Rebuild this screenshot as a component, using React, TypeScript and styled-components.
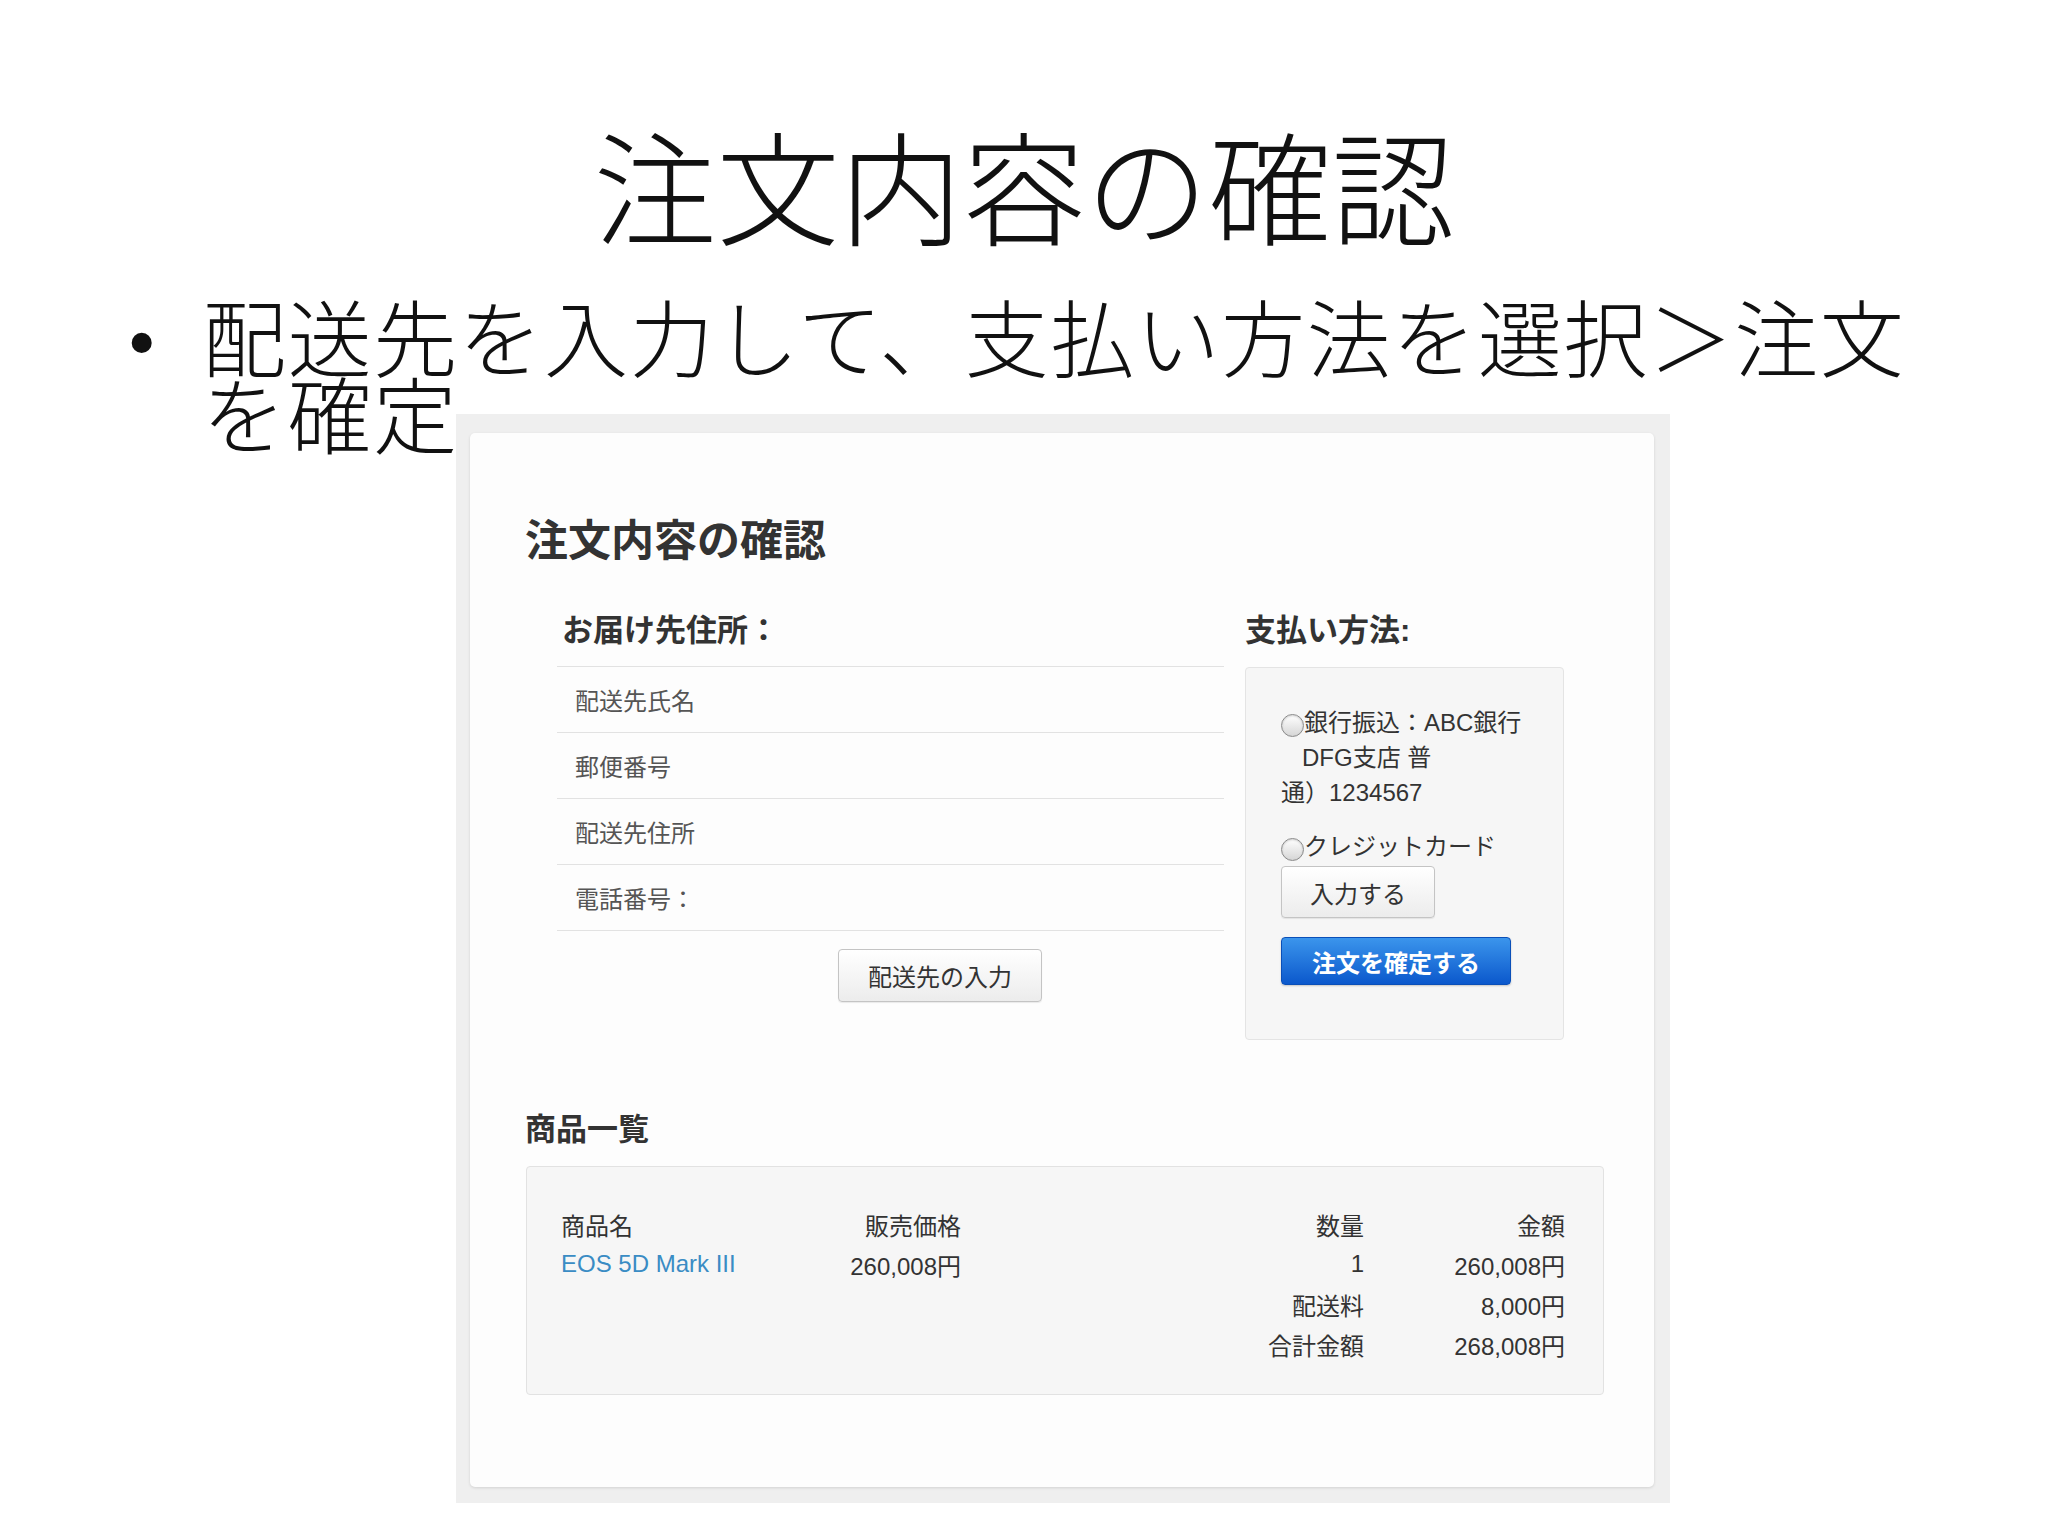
import React from 'react';
import styled, { createGlobalStyle } from 'styled-components';

const GlobalStyle = createGlobalStyle`
  html, body {
    margin: 0;
    padding: 0;
    background: #fff;
  }
  body {
    font-family: "Liberation Sans", "Noto Sans CJK JP", sans-serif;
  }
`;

const Slide = styled.div`
  width: 2048px;
  height: 1536px;
  overflow: hidden;
  background: #fff;
`;

const SlideTitle = styled.h1`
  margin: 0;
  padding-top: 121px;
  font-family: "Noto Sans CJK JP", sans-serif;
  font-weight: 300;
  font-size: 123px;
  line-height: 123px;
  text-align: center;
  color: #111;
`;

const BulletText = styled.p`
  margin: 52px 0 0;
  padding-left: 202px;
  text-indent: -75px;
  font-family: "Noto Sans CJK JP", sans-serif;
  font-weight: 300;
  font-size: 84px;
  letter-spacing: 1.5px;
  line-height: 77px;
  color: #111;
  white-space: nowrap;
`;

const Bullet = styled.span`
  display: inline-block;
  width: 75px;
  text-indent: 0;
  letter-spacing: 0;
  line-height: 40px;
  font-family: "Liberation Serif", serif;
  font-size: 84px;
`;

const Frame = styled.div`
  margin: -36px 0 0 456px;
  width: 1214px;
  height: 1089px;
  box-sizing: border-box;
  padding: 19px 16px 16px 14px;
  background: #efefef;
`;

const Card = styled.div`
  height: 1054px;
  box-sizing: border-box;
  padding: 83px 50px 0 55px;
  background: #fdfdfd;
  border-radius: 5px;
  box-shadow: 0 1px 3px rgba(0, 0, 0, 0.12);
  color: #333;
`;

const CardTitle = styled.h2`
  margin: 0;
  font-size: 43px;
  line-height: 50px;
  font-weight: 700;
  color: #333;
`;

const Columns = styled.div`
  display: flex;
  gap: 21px;
  margin: 45px 0 0 32px;
  align-items: flex-start;
`;

const LeftColumn = styled.div`
  width: 667px;
`;

const RightColumn = styled.div`
  width: 319px;
`;

const SectionHeading = styled.h3<{ $line?: boolean }>`
  margin: 0;
  padding: 0 0 ${({ $line }) => ($line ? '15px' : '16px')} ${({ $line }) => ($line ? '5px' : '0')};
  font-size: 31px;
  line-height: 40px;
  font-weight: 700;
  color: #333;
  border-bottom: ${({ $line }) => ($line ? '1px solid #e2e2e2' : 'none')};
`;

const AddressRow = styled.div`
  height: 65px;
  display: flex;
  align-items: center;
  padding-left: 18px;
  border-bottom: 1px solid #e2e2e2;
  font-size: 24px;
  color: #555;
`;

const GrayButton = styled.button<{ $width: number; $height: number; $offset?: number }>`
  display: block;
  width: ${({ $width }) => $width}px;
  height: ${({ $height }) => $height}px;
  margin-left: ${({ $offset }) => $offset ?? 0}px;
  padding: 0;
  font-family: inherit;
  font-size: 24px;
  color: #333;
  background: linear-gradient(#ffffff, #ececec);
  border: 1px solid #c4c4c4;
  border-radius: 4px;
  box-shadow: 0 1px 1px rgba(0, 0, 0, 0.08);
`;

const AddressButton = styled(GrayButton)`
  margin-top: 18px;
`;

const PaymentPanel = styled.div`
  box-sizing: border-box;
  padding: 37px 20px 54px 35px;
  background: #f6f6f6;
  border: 1px solid #e4e4e4;
  border-radius: 4px;
`;

const PayOption = styled.div<{ $gap?: number }>`
  margin-top: ${({ $gap }) => $gap ?? 0}px;
  font-size: 24px;
  line-height: 35px;
  color: #333;
  white-space: nowrap;
`;

const Radio = styled.span`
  display: inline-block;
  box-sizing: border-box;
  width: 23px;
  height: 23px;
  vertical-align: -6px;
  border-radius: 50%;
  border: 1px solid #8a8a8a;
  background: linear-gradient(#ffffff, #d6d6d6);
  box-shadow: inset 0 1px 2px rgba(0, 0, 0, 0.18);
`;

const Indent = styled.span`
  padding-left: 21px;
`;

const CardInputButton = styled(GrayButton)`
  margin-top: 2px;
`;

const ConfirmButton = styled.button`
  display: block;
  width: 230px;
  height: 48px;
  margin-top: 19px;
  padding: 0;
  font-family: inherit;
  font-size: 24px;
  font-weight: 700;
  color: #fff;
  background: linear-gradient(#3b95ec, #0b58cc);
  border: 1px solid #0a4fb8;
  border-radius: 4px;
  box-shadow: 0 1px 2px rgba(0, 0, 0, 0.2);
`;

const ProductsHeading = styled.h3`
  margin: 70px 0 0;
  font-size: 31px;
  line-height: 40px;
  font-weight: 700;
  color: #333;
`;

const ProductsBox = styled.div`
  box-sizing: border-box;
  width: 1078px;
  margin: 16px 0 0 1px;
  padding: 37px 38px 30px 34px;
  background: #f6f6f6;
  border: 1px solid #e2e2e2;
  border-radius: 4px;
`;

const ProductsGrid = styled.div`
  display: grid;
  grid-template-columns: 259px 141px 403px 201px;
  grid-auto-rows: 40px;
  align-items: center;
  font-size: 24px;
  color: #333;
`;

const Cell = styled.div<{ $right?: boolean }>`
  text-align: ${({ $right }) => ($right ? 'right' : 'left')};
  white-space: nowrap;
`;

const ProductLink = styled.a`
  color: #3a8cc4;
  text-decoration: none;
`;

const summary = [
  { label: '配送料', value: '8,000円' },
  { label: '合計金額', value: '268,008円' },
];

const addressFields = ['配送先氏名', '郵便番号', '配送先住所', '電話番号：'];

export default function App() {
  return (
    <Slide>
      <GlobalStyle />
      <SlideTitle>注文内容の確認</SlideTitle>
      <BulletText>
        <Bullet>•</Bullet>配送先を入力して、支払い方法を選択＞注文
        <br />
        を確定
      </BulletText>

      <Frame>
        <Card>
          <CardTitle>注文内容の確認</CardTitle>

          <Columns>
            <LeftColumn>
              <SectionHeading $line>お届け先住所：</SectionHeading>
              {addressFields.map((f) => (
                <AddressRow key={f}>{f}</AddressRow>
              ))}
              <AddressButton $width={204} $height={53} $offset={281}>
                配送先の入力
              </AddressButton>
            </LeftColumn>

            <RightColumn>
              <SectionHeading>支払い方法:</SectionHeading>
              <PaymentPanel>
                <PayOption>
                  <Radio />銀行振込：ABC銀行
                  <br />
                  <Indent>DFG支店 普</Indent>
                  <br />
                  通）1234567
                </PayOption>
                <PayOption $gap={19}>
                  <Radio />クレジットカード
                </PayOption>
                <CardInputButton $width={154} $height={52}>
                  入力する
                </CardInputButton>
                <ConfirmButton>注文を確定する</ConfirmButton>
              </PaymentPanel>
            </RightColumn>
          </Columns>

          <ProductsHeading>商品一覧</ProductsHeading>
          <ProductsBox>
            <ProductsGrid>
              <Cell>商品名</Cell>
              <Cell $right>販売価格</Cell>
              <Cell $right>数量</Cell>
              <Cell $right>金額</Cell>

              <Cell>
                <ProductLink href="#">EOS 5D Mark III</ProductLink>
              </Cell>
              <Cell $right>260,008円</Cell>
              <Cell $right>1</Cell>
              <Cell $right>260,008円</Cell>

              {summary.map((s) => (
                <React.Fragment key={s.label}>
                  <Cell />
                  <Cell />
                  <Cell $right>{s.label}</Cell>
                  <Cell $right>{s.value}</Cell>
                </React.Fragment>
              ))}
            </ProductsGrid>
          </ProductsBox>
        </Card>
      </Frame>
    </Slide>
  );
}
